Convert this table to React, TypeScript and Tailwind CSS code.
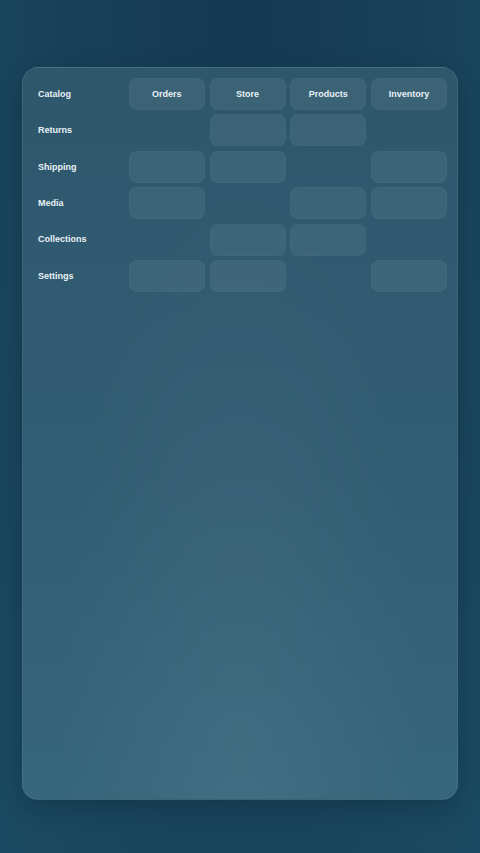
const COLUMNS = ["Orders", "Store", "Products", "Inventory"];

// true = filled cell
const ROWS: { label: string; cells: boolean[] }[] = [
  { label: "Returns", cells: [false, true, true, false] },
  { label: "Shipping", cells: [true, true, false, true] },
  { label: "Media", cells: [true, false, true, true] },
  { label: "Collections", cells: [false, true, true, false] },
  { label: "Settings", cells: [true, true, false, true] },
];

const cellBase = "h-[32px] rounded-[8px]";
const filled = "bg-white/[0.065] border border-white/[0.025]";

export default function App() {
  return (
    <div
      className="min-h-[853px] w-full bg-[radial-gradient(ellipse_at_50%_0%,#143a52_0%,#173f57_40%,#1a4a61_100%)] px-[22px] pt-[67px] pb-[53px]"
      style={{ fontFamily: '"Liberation Sans", Arial, sans-serif' }}
    >
      <div className="relative h-[733px] overflow-hidden rounded-[16px] border border-white/[0.07] bg-[linear-gradient(180deg,#2e576c_0%,#315d72_55%,#36667b_100%)] p-[10px] shadow-[0_8px_24px_rgba(0,0,0,0.18)]">
        <div className="pointer-events-none absolute inset-0 bg-[radial-gradient(ellipse_at_50%_95%,rgba(255,255,255,0.05)_0%,rgba(255,255,255,0)_60%)]" />
        <div className="relative grid grid-cols-[91px_repeat(4,76px)] gap-x-[4.75px] gap-y-[4.4px]">
          <div className="flex h-[32px] items-center pl-[5px] pt-[1px] text-[9px] font-bold text-[#e8f1f6]">
            Catalog
          </div>
          {COLUMNS.map((col) => (
            <div
              key={col}
              className={`${cellBase} ${filled} flex items-center justify-center pt-[1px] text-[9px] font-bold text-[#e8f1f6]`}
            >
              {col}
            </div>
          ))}
          {ROWS.map((row) => (
            <div key={row.label} className="contents">
              <div className="flex h-[32px] items-center pl-[5px] pt-[1px] text-[9px] font-bold text-[#e8f1f6]">
                {row.label}
              </div>
              {row.cells.map((on, i) => (
                <div key={i} className={on ? `${cellBase} ${filled}` : cellBase} />
              ))}
            </div>
          ))}
        </div>
      </div>
    </div>
  );
}
